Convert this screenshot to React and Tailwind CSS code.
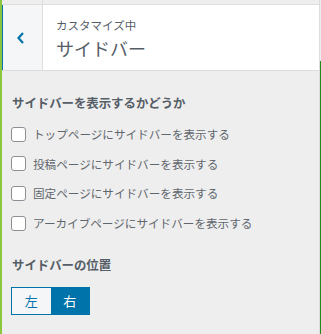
import { useState } from 'react';

const options = [
  'トップページにサイドバーを表示する',
  '投稿ページにサイドバーを表示する',
  '固定ページにサイドバーを表示する',
  'アーカイブページにサイドバーを表示する',
];

const App = () => {
  const [checked, setChecked] = useState([false, false, false, false]);
  const [position, setPosition] = useState('right');

  const toggle = (i) => {
    setChecked(checked.map((c, idx) => (idx === i ? !c : c)));
  };

  return (
    <div
      className="w-[321px] h-[334px] flex bg-[#eeeeee] text-[#555d66] overflow-hidden"
      style={{ fontFamily: '"Noto Sans CJK JP", "Noto Sans", sans-serif' }}
    >
      <div className="w-[2px] bg-[#8cc63f]" />
      <div className="flex-1 flex flex-col">
        <div className="h-[5px] flex border-b border-[#dddddd]">
          <div className="w-[41px] border-r border-[#dddddd]" />
        </div>
        <div className="h-[66px] flex bg-white border-b border-[#dddddd]">
          <button className="w-[41px] flex items-center justify-center pr-[3px] bg-[#f5f6f7] border-l border-[#0073aa] border-r border-r-[#dddddd]">
            <svg width="10" height="14" viewBox="0 0 10 14">
              <path d="M7 2 L2.5 7 L7 12" fill="none" stroke="#0073aa" strokeWidth="2.2" />
            </svg>
          </button>
          <div className="flex flex-col justify-center pl-[13px] pt-[1px]">
            <span className="text-[11.5px] leading-[16px] text-[#555d66]">カスタマイズ中</span>
            <span className="text-[18px] leading-[24px] text-[#555d66] mt-[3px]">サイドバー</span>
          </div>
        </div>
        <div className="flex-1 pl-[9px] pt-[22px]">
          <h3 className="pl-[1px] text-[12.4px] font-bold leading-[20px] text-[#555d66]">サイドバーを表示するかどうか</h3>
          <div className="mt-[12px] flex flex-col gap-[11.7px]">
            {options.map((label, i) => (
              <label key={label} className="flex items-center h-[18px] cursor-pointer">
                <span
                  onClick={() => toggle(i)}
                  className={`w-[15px] h-[15px] rounded-[3px] border border-[#8c8f94] ${checked[i] ? 'bg-[#0073aa]' : 'bg-white'}`}
                />
                <span className="ml-[7px] text-[11.6px] leading-[18px] text-[#5f666d]">{label}</span>
              </label>
            ))}
          </div>
          <h3 className="mt-[23px] pl-[1px] text-[12.4px] font-bold leading-[20px] text-[#555d66]">サイドバーの位置</h3>
          <div className="mt-[12px] flex w-[79px] h-[28px] border border-[#0073aa]">
            <button
              onClick={() => setPosition('left')}
              className={`flex-1 text-[13px] ${position === 'left' ? 'bg-[#0073aa] text-white' : 'bg-[#f5f6f7] text-[#0073aa]'}`}
            >
              左
            </button>
            <button
              onClick={() => setPosition('right')}
              className={`flex-1 text-[13px] ${position === 'right' ? 'bg-[#0073aa] text-white' : 'bg-[#f5f6f7] text-[#0073aa]'}`}
            >
              右
            </button>
          </div>
        </div>
      </div>
      <div className="w-[1px] bg-[#dddddd]" />
      <div className="w-[1px] flex flex-col">
        <div className="h-[61px]" />
        <div className="flex-1 bg-[#1e8c1e]" />
      </div>
    </div>
  );
};

export default App;
